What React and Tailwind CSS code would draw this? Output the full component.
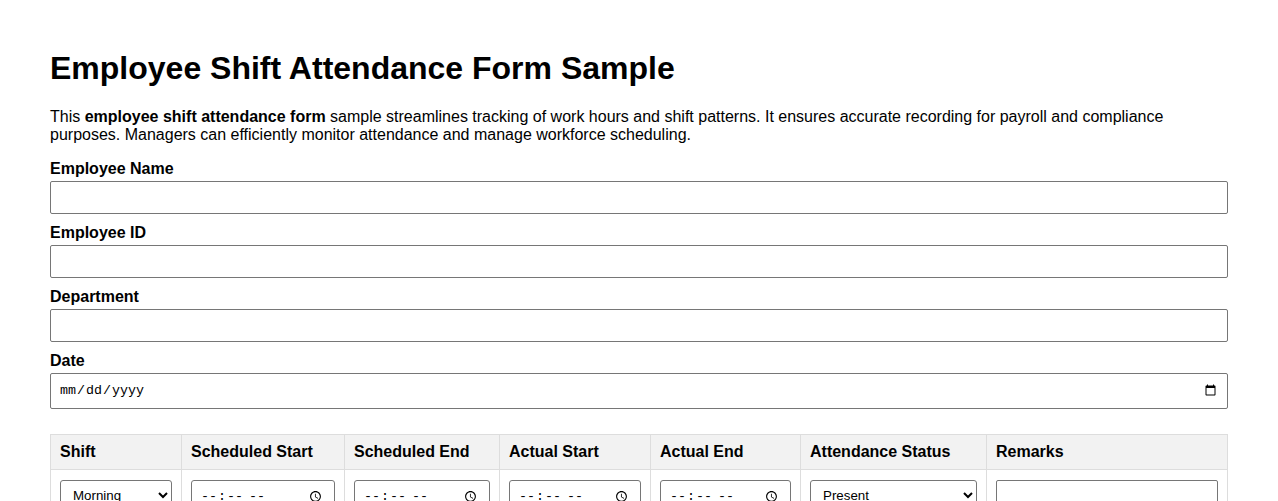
export default function App() {
  const cols = [
    { label: 'Shift', w: 'w-[131px]' },
    { label: 'Scheduled Start', w: 'w-[163px]' },
    { label: 'Scheduled End', w: 'w-[155px]' },
    { label: 'Actual Start', w: 'w-[151px]' },
    { label: 'Actual End', w: 'w-[150px]' },
    { label: 'Attendance Status', w: 'w-[186px]' },
    { label: 'Remarks', w: 'w-[241px]' },
  ]

  const inputCls = 'block w-full h-[33px] border border-[#767676] rounded-[2px] px-[8px] text-[13.33px] bg-white'
  const timeCls = 'block w-full h-[33px] border border-[#767676] rounded-[3px] px-[8px] text-[13.33px] bg-white font-["Liberation_Mono",monospace]'
  const selectCls = 'block w-full h-[30px] border border-[#767676] rounded-[3px] px-[8px] text-[13.33px] bg-white'

  return (
    <div className="bg-white px-[50px] pt-[50px] pb-10 text-black font-['Liberation_Sans',Arial,sans-serif]">
      <h1 className="text-[32px] font-bold leading-[37px] mb-[21px]">Employee Shift Attendance Form Sample</h1>
      <p className="text-[16px] leading-[18px] mb-[16px]">
        This <strong>employee shift attendance form</strong> sample streamlines tracking of work hours and shift patterns. It ensures accurate recording for payroll and compliance purposes. Managers can efficiently monitor attendance and manage workforce scheduling.
      </p>

      <form>
        {['Employee Name', 'Employee ID', 'Department'].map((label) => (
          <div key={label} className="mb-[10px]">
            <label className="block font-bold text-[16px] leading-[18px] mb-[3px]">{label}</label>
            <input type="text" className={inputCls} />
          </div>
        ))}
        <div className="mb-[25px]">
          <label className="block font-bold text-[16px] leading-[18px] mb-[3px]">Date</label>
          <input type="date" className="block w-full h-[36px] border border-[#767676] rounded-[2px] px-[8px] text-[13.33px] bg-white font-['Liberation_Mono',monospace]" />
        </div>

        <table className="w-full table-fixed border-collapse">
          <colgroup>
            {cols.map((c) => (
              <col key={c.label} className={c.w} />
            ))}
          </colgroup>
          <thead>
            <tr className="bg-[#f2f2f2]">
              {cols.map((c) => (
                <th key={c.label} className="border border-[#dddddd] px-[9px] py-[8px] text-left font-bold text-[16px] leading-[18px]">
                  {c.label}
                </th>
              ))}
            </tr>
          </thead>
          <tbody>
            <tr>
              <td className="border border-[#dddddd] px-[9px] py-[10px] align-top">
                <select className={selectCls} defaultValue="Morning">
                  <option>Morning</option>
                  <option>Afternoon</option>
                  <option>Night</option>
                </select>
              </td>
              {[0, 1, 2, 3].map((i) => (
                <td key={i} className="border border-[#dddddd] px-[9px] py-[10px] align-top">
                  <input type="time" className={timeCls} />
                </td>
              ))}
              <td className="border border-[#dddddd] px-[9px] py-[10px] align-top">
                <select className={selectCls} defaultValue="Present">
                  <option>Present</option>
                  <option>Absent</option>
                  <option>Late</option>
                  <option>On Leave</option>
                </select>
              </td>
              <td className="border border-[#dddddd] px-[9px] py-[10px] align-top">
                <input type="text" className={inputCls} />
              </td>
            </tr>
          </tbody>
        </table>
      </form>
    </div>
  )
}
